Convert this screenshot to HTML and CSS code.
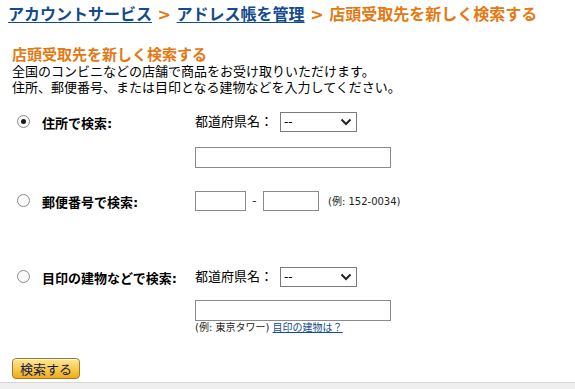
FILE: index.html
```html
<!DOCTYPE html>
<html lang="ja">
<head>
<meta charset="utf-8">
<title>店頭受取先を新しく検索する</title>
<link rel="stylesheet" href="styles.css">
</head>
<body>
<div class="page">
  <div class="crumbs">
    <a href="#" class="crumb-link">アカウントサービス</a>
    <span class="sep">&gt;</span>
    <a href="#" class="crumb-link">アドレス帳を管理</a>
    <span class="current">&gt; 店頭受取先を新しく検索する</span>
  </div>

  <div class="content">
    <h1 class="title">店頭受取先を新しく検索する</h1>
    <p class="desc">全国のコンビニなどの店舗で商品をお受け取りいただけます。<br>住所、郵便番号、または目印となる建物などを入力してください。</p>

    <form class="search">
      <div class="row row-addr">
        <span class="radio checked"></span>
        <span class="label">住所で検索:</span>
        <div class="field">
          <span class="pref">都道府県名：</span>
          <span class="select-wrap">
            <select class="select"><option>--</option></select>
            <svg class="chev" width="12" height="8" viewBox="0 0 12 8"><path d="M1.5 1.5 L6 6 L10.5 1.5" fill="none" stroke="#222" stroke-width="2"/></svg>
          </span>
        </div>
      </div>
      <div class="row row-addr-text">
        <span></span><span></span>
        <div class="field"><input class="text wide" type="text"></div>
      </div>

      <div class="row row-zip">
        <span class="radio"></span>
        <span class="label">郵便番号で検索:</span>
        <div class="field zip">
          <input class="text zip1" type="text">
          <span class="dash">-</span>
          <input class="text zip2" type="text">
          <span class="hint zip-hint">(例: 152-0034)</span>
        </div>
      </div>

      <div class="row row-land">
        <span class="radio"></span>
        <span class="label">目印の建物などで検索:</span>
        <div class="field">
          <span class="pref">都道府県名：</span>
          <span class="select-wrap">
            <select class="select"><option>--</option></select>
            <svg class="chev" width="12" height="8" viewBox="0 0 12 8"><path d="M1.5 1.5 L6 6 L10.5 1.5" fill="none" stroke="#222" stroke-width="2"/></svg>
          </span>
        </div>
      </div>
      <div class="row row-land-text">
        <span></span><span></span>
        <div class="field stack">
          <input class="text wide" type="text">
          <span class="hint">(例: 東京タワー) <a href="#" class="hint-link">目印の建物は？</a></span>
        </div>
      </div>
    </form>

    <button class="btn" type="button">検索する</button>
  </div>
  <div class="band"></div>
</div>
</body>
</html>
```

FILE: styles.css
```css
html, body {
  margin: 0;
  padding: 0;
  background: #ffffff;
}

body {
  font-family: "DejaVu Sans", "Noto Sans CJK JP", sans-serif;
  color: #000;
  overflow: hidden;
}

.page {
  width: 575px;
}

.crumbs {
  padding: 4px 0 0 8px;
  font-size: 16px;
  font-weight: bold;
  line-height: 21px;
  white-space: nowrap;
  font-family: "DejaVu Sans", "Noto Sans CJK JP", sans-serif;
}

.crumb-link {
  color: #134b8f;
  text-decoration: underline;
  text-underline-offset: 2px;
}

.sep,
.current {
  color: #e47911;
}

.content {
  padding: 0 0 0 12px;
}

.title {
  margin: 21px 0 0 0;
  font-size: 15px;
  line-height: 18px;
  font-weight: bold;
  color: #e47911;
}

.desc {
  margin: 0;
  font-size: 13px;
  line-height: 16px;
}

.search {
  margin: 16px 0 0 0;
  padding-left: 5px;
}

.row {
  display: grid;
  grid-template-columns: 25px 153px 1fr;
  align-items: center;
}

.row-addr-text {
  margin-top: 15px;
}

.row-zip {
  margin-top: 23px;
}

.row-land {
  margin-top: 56px;
}

.row-land-text {
  margin-top: 13px;
  align-items: start;
}

.radio {
  width: 11px;
  height: 11px;
  border: 1px solid #8a8a8a;
  border-radius: 50%;
  background: #fafafa;
  display: flex;
  align-items: center;
  justify-content: center;
  margin-top: -2px;
}

.radio.checked::after {
  content: "";
  width: 5px;
  height: 5px;
  border-radius: 50%;
  background: #1a1a1a;
}

.label {
  font-size: 13px;
  font-weight: bold;
  line-height: 16px;
  padding-top: 3px;
}

.field {
  display: flex;
  align-items: center;
  font-size: 13px;
}

.field.stack {
  flex-direction: column;
  align-items: flex-start;
}

.pref {
  font-size: 13px;
  line-height: 16px;
}

.select-wrap {
  position: relative;
  display: inline-block;
  margin-left: 7px;
  width: 77px;
  height: 20px;
}

.select {
  appearance: none;
  -webkit-appearance: none;
  width: 77px;
  height: 20px;
  margin: 0;
  padding: 0 0 0 3px;
  border: 1px solid #7a7a7a;
  border-radius: 0;
  background: #fff;
  font-family: "DejaVu Sans", sans-serif;
  font-size: 12px;
  color: #000;
  box-sizing: border-box;
}

.chev {
  position: absolute;
  right: 5px;
  top: 6px;
  pointer-events: none;
}

.text {
  box-sizing: border-box;
  margin: 0;
  padding: 0;
  border: 1px solid #8a8a8a;
  border-radius: 0;
  background: #fff;
  height: 21px;
}

.text.wide {
  width: 196px;
}

.zip1 {
  width: 51px;
  height: 20px;
}

.zip2 {
  width: 56px;
  height: 20px;
}

.dash {
  width: 17px;
  text-align: center;
  font-size: 12px;
  line-height: 16px;
  color: #333;
}

.hint {
  font-size: 10px;
  line-height: 13px;
  color: #222;
  white-space: nowrap;
}

.zip-hint {
  margin-left: 9px;
}

.hint-link {
  color: #134b8f;
  text-decoration: underline;
}

.btn {
  display: block;
  margin: 24px 0 0 0;
  width: 68px;
  height: 21px;
  padding: 0;
  border: 1px solid #a27a24;
  border-radius: 4px;
  background: linear-gradient(#fde79a, #f7c94a 55%, #efab1c);
  box-shadow: inset 0 1px 0 rgba(255, 255, 255, 0.7);
  font-family: "Noto Sans CJK JP", sans-serif;
  font-size: 13px;
  line-height: 17px;
  color: #15184a;
}

.band {
  margin-top: 3px;
  height: 20px;
  border-top: 1px solid #d6d6d6;
  background: #efefef;
}
```
